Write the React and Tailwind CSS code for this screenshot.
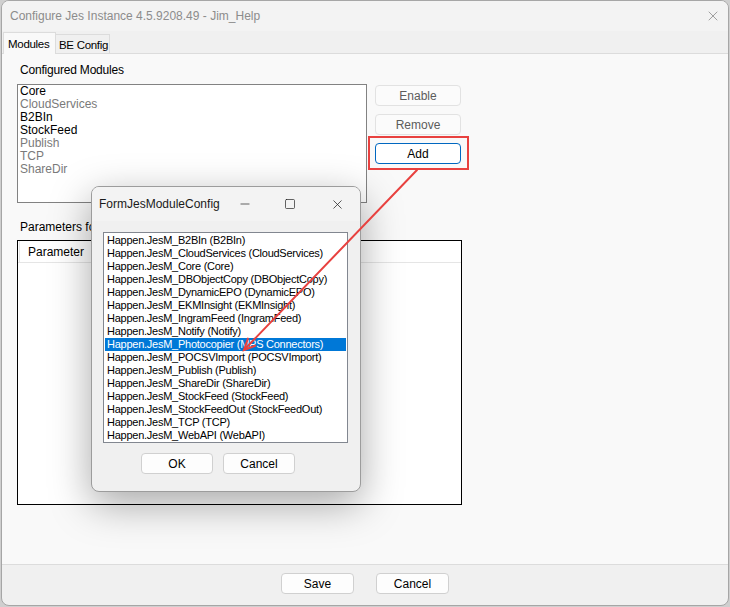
import { X, Minus, Square } from 'lucide-react';

const configured = [
  { name: 'Core', on: true },
  { name: 'CloudServices', on: false },
  { name: 'B2BIn', on: true },
  { name: 'StockFeed', on: true },
  { name: 'Publish', on: false },
  { name: 'TCP', on: false },
  { name: 'ShareDir', on: false },
];

const available = [
  'Happen.JesM_B2BIn (B2BIn)',
  'Happen.JesM_CloudServices (CloudServices)',
  'Happen.JesM_Core (Core)',
  'Happen.JesM_DBObjectCopy (DBObjectCopy)',
  'Happen.JesM_DynamicEPO (DynamicEPO)',
  'Happen.JesM_EKMInsight (EKMInsight)',
  'Happen.JesM_IngramFeed (IngramFeed)',
  'Happen.JesM_Notify (Notify)',
  'Happen.JesM_Photocopier (MPS Connectors)',
  'Happen.JesM_POCSVImport (POCSVImport)',
  'Happen.JesM_Publish (Publish)',
  'Happen.JesM_ShareDir (ShareDir)',
  'Happen.JesM_StockFeed (StockFeed)',
  'Happen.JesM_StockFeedOut (StockFeedOut)',
  'Happen.JesM_TCP (TCP)',
  'Happen.JesM_WebAPI (WebAPI)',
];

const font = { fontFamily: '"Liberation Sans", Arial, sans-serif' };

// plain win11 style button
const Btn = ({ children, className = '' }) => (
  <div
    className={`h-[21px] flex items-center justify-center rounded-[4px] border text-[12px] leading-none ${className}`}
  >
    {children}
  </div>
);

const App = () => {
  return (
    <div className="w-[730px] h-[607px] bg-[#cfcfcf] relative overflow-hidden" style={font}>
      <div className="ml-[1px] w-[728px] h-[606px] border border-[#a6a6a6] rounded-t-lg rounded-b-lg overflow-hidden flex flex-col bg-[#f0f0f0]">
        {/* title bar */}
        <div className="h-[30px] shrink-0 bg-[#f3f3f3] flex items-center justify-between pl-[8px] pr-[7px]">
          <span className="text-[12px] text-[#8c8c8c]">Configure Jes Instance 4.5.9208.49 - Jim_Help</span>
          <X className="w-[16px] h-[16px] text-[#8a8a8a]" strokeWidth={1.2} />
        </div>

        {/* tab strip */}
        <div className="h-[22px] shrink-0 flex items-end pl-[1px] bg-[#f0f0f0]">
          <div className="h-[22px] w-[53px] bg-[#f9f9f9] border border-b-0 border-[#dcdcdc] text-[11.5px] text-black pl-[4px] pt-[3px] relative top-[1px] whitespace-nowrap tracking-[-0.3px]">
            Modules
          </div>
          <div className="h-[19px] w-[54px] bg-[#f0f0f0] border border-l-0 border-b-0 border-[#dcdcdc] text-[11.5px] text-black pl-[3px] pt-[2px] whitespace-nowrap tracking-[-0.3px]">
            BE Config
          </div>
        </div>

        {/* tab page */}
        <div className="flex-1 bg-[#f9f9f9] border-t border-b border-[#dcdcdc] pl-[15px] pt-[8px]">
          <div className="text-[12px] text-black pl-[3px] leading-[16px] tracking-[-0.2px]">Configured Modules</div>
          <div className="flex mt-[6px] gap-[8px]">
            <div className="w-[350px] h-[119px] bg-white border border-[#828282] pl-[2px]">
              {configured.map((m) => (
                <div
                  key={m.name}
                  className={`text-[12px] leading-[13px] ${m.on ? 'text-black' : 'text-[#7a7a7a]'}`}
                >
                  {m.name}
                </div>
              ))}
            </div>
            <div className="flex flex-col gap-[8px] mt-[1px] w-[86px]">
              <Btn className="bg-[#fbfbfb] border-[#e2e2e2] text-[#5c5c5c]">Enable</Btn>
              <Btn className="bg-[#fbfbfb] border-[#e2e2e2] text-[#5c5c5c]">Remove</Btn>
              <Btn className="bg-white border-[#0067c0] text-black">Add</Btn>
            </div>
          </div>

          <div className="text-[12px] text-black pl-[3px] leading-[16px] mt-[16px]">Parameters for</div>
          <div className="mt-[5px] w-[445px] h-[265px] bg-white border border-black">
            <div className="h-[22px] border-b border-[#e5e5e5] flex items-center">
              <div className="h-full w-[120px] flex items-center pl-[8px] text-[12px] text-black border-l border-[#e5e5e5] ml-[1px]">
                Parameter
              </div>
            </div>
          </div>
        </div>

        {/* bottom buttons */}
        <div className="h-[40px] shrink-0 flex justify-center gap-[22px] pt-[8px]">
          <Btn className="w-[73px] bg-[#fdfdfd] border-[#d0d0d0] text-black">Save</Btn>
          <Btn className="w-[73px] bg-[#fdfdfd] border-[#d0d0d0] text-black">Cancel</Btn>
        </div>
      </div>

      {/* module picker dialog */}
      <div className="absolute left-[91px] top-[186px] w-[270px] h-[306px] rounded-lg border border-[#9c9c9c] bg-[#f0f0f0] shadow-[0_12px_40px_rgba(0,0,0,0.35)] flex flex-col overflow-hidden">
        <div className="h-[34px] shrink-0 flex items-center pl-[7px] bg-[#f3f3f3]">
          <span className="text-[12px] text-[#1a1a1a] flex-1">FormJesModuleConfig</span>
          <Minus className="w-[14px] h-[14px] text-[#222] mr-[32px]" strokeWidth={1.2} />
          <Square className="w-[12px] h-[12px] text-[#222] mr-[34px]" strokeWidth={1.4} />
          <X className="w-[15px] h-[15px] text-[#222] mr-[15px]" strokeWidth={1.2} />
        </div>
        <div className="ml-[11px] mt-[11px] w-[245px] h-[211px] bg-white border border-[#828790] pt-[1px] px-[1px]">
          {available.map((a, i) => (
            <div
              key={a}
              className={`text-[11px] leading-[13px] pl-[2px] whitespace-nowrap tracking-[-0.25px] ${
                i === 8 ? 'bg-[#0078d7] text-white' : 'text-black'
              }`}
            >
              {a}
            </div>
          ))}
        </div>
        <div className="flex gap-[10px] ml-[49px] mt-[10px]">
          <Btn className="w-[72px] bg-[#fdfdfd] border-[#d0d0d0] text-black">OK</Btn>
          <Btn className="w-[72px] bg-[#fdfdfd] border-[#d0d0d0] text-black">Cancel</Btn>
        </div>
      </div>

      {/* red highlight around Add */}
      <div className="absolute left-[368px] top-[136px] w-[101px] h-[34px] border-2 border-[#e8413f]" />

      {/* red arrow */}
      <svg className="absolute left-0 top-0 pointer-events-none" width="730" height="607">
        <g stroke="#e8413f" strokeWidth="2" strokeLinecap="round" fill="none">
          <line x1="417" y1="170" x2="244" y2="350" />
          <polyline points="255.2,345.7 244,350 247.9,338.6" />
        </g>
      </svg>
    </div>
  );
};

export default App;
